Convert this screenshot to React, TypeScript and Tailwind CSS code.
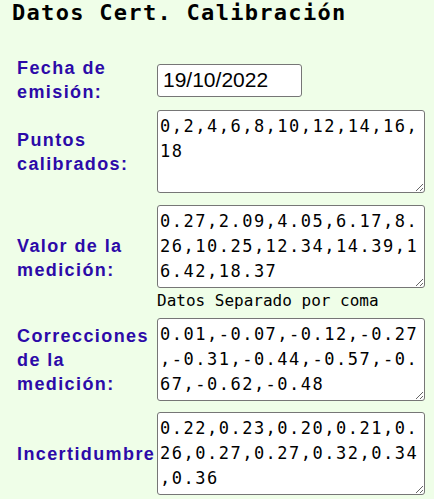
import { useState } from "react";

const labelCls =
  "w-[157px] shrink-0 pl-[17px] font-['Liberation_Sans',Arial,sans-serif] text-[18px] font-bold leading-[24px] tracking-[1.4px] text-[#2c0aa8]";

const areaCls =
  "block h-[83px] w-[268px] resize overflow-hidden rounded-[3px] border border-[#767676] bg-white px-[2px] py-[3px] font-['DejaVu_Sans_Mono',monospace] text-[17px] leading-[25px] tracking-[1.5px] break-all [line-break:anywhere] text-black";

export default function App() {
  const [fecha, setFecha] = useState("19/10/2022");
  const [puntos, setPuntos] = useState("0,2,4,6,8,10,12,14,16,18");
  const [valor, setValor] = useState(
    "0.27,2.09,4.05,6.17,8.26,10.25,12.34,14.39,16.42,18.37"
  );
  const [correcciones, setCorrecciones] = useState(
    "0.01,-0.07,-0.12,-0.27,-0.31,-0.44,-0.57,-0.67,-0.62,-0.48"
  );
  const [incertidumbre, setIncertidumbre] = useState(
    "0.22,0.23,0.20,0.21,0.26,0.27,0.27,0.32,0.34,0.36"
  );

  return (
    <div className="min-h-screen bg-[#effee8]">
      <h2 className="pl-[12px] font-['DejaVu_Sans_Mono',monospace] text-[22px] font-bold leading-[26px] tracking-[1.3px] text-black">
        Datos Cert. Calibración
      </h2>

      <div className="flex flex-col">
        {/* Fecha */}
        <div className="mt-[30px] flex items-center">
          <label className={labelCls}>
            Fecha de
            <br />
            emisión:
          </label>
          <input
            type="text"
            value={fecha}
            onChange={(e) => setFecha(e.target.value)}
            className="h-[33px] w-[145px] rounded-[3px] border border-[#767676] bg-white pl-[5px] font-['Liberation_Sans',Arial,sans-serif] text-[21px] text-black outline-none"
          />
        </div>

        {/* Puntos */}
        <div className="mt-[6px] flex items-center">
          <label className={labelCls}>
            Puntos
            <br />
            calibrados:
          </label>
          <textarea
            value={puntos}
            onChange={(e) => setPuntos(e.target.value)}
            className={areaCls}
          />
        </div>

        {/* Valor */}
        <div className="mt-[12px] flex items-center">
          <label className={labelCls}>
            Valor de la
            <br />
            medición:
          </label>
          <div className="flex flex-col">
            <textarea
              value={valor}
              onChange={(e) => setValor(e.target.value)}
              className={areaCls}
            />
            <span className="mt-[3px] font-['DejaVu_Sans_Mono',monospace] text-[16px] leading-[20px] text-black">
              Datos Separado por coma
            </span>
          </div>
        </div>

        {/* Correcciones */}
        <div className="mt-[7px] flex items-center">
          <label className={labelCls}>
            Correcciones
            <br />
            de la
            <br />
            medición:
          </label>
          <textarea
            value={correcciones}
            onChange={(e) => setCorrecciones(e.target.value)}
            className={areaCls}
          />
        </div>

        {/* Incertidumbre */}
        <div className="mt-[11px] flex items-center">
          <label className={labelCls}>Incertidumbre</label>
          <textarea
            value={incertidumbre}
            onChange={(e) => setIncertidumbre(e.target.value)}
            className={areaCls}
          />
        </div>
      </div>
    </div>
  );
}
